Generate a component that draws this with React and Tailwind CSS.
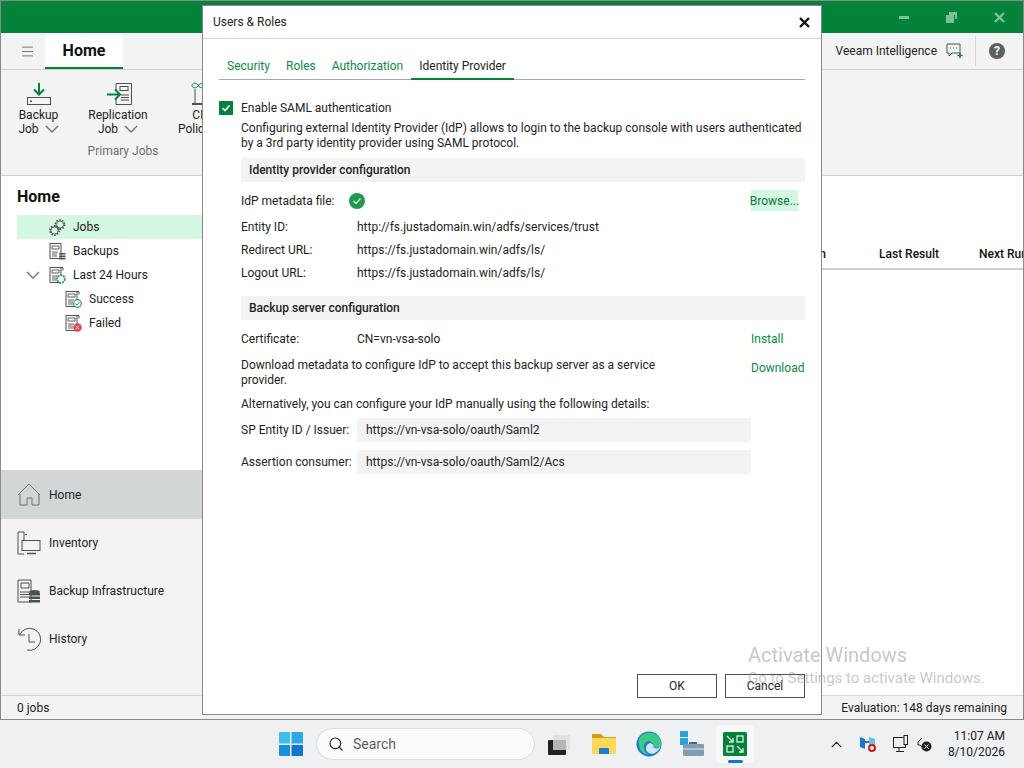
import { ChevronUp, Search, Menu } from "lucide-react";

const Chevron = ({ className = "" }) => (
  <svg width="14" height="8" viewBox="0 0 14 8" fill="none" stroke="#6b7072" strokeWidth="1.3" className={className}>
    <path d="M1 1l6 6 6-6" />
  </svg>
);

const BackupIcon = () => (
  <svg width="26" height="24" viewBox="0 0 26 24" fill="none">
    <path d="M13 1v11M8 7.5l5 5 5-5" stroke="#04823a" strokeWidth="2" />
    <rect x="1.5" y="15.5" width="23" height="7" stroke="#4b5052" />
    <rect x="4" y="18.5" width="2" height="1.5" fill="#04823a" />
  </svg>
);

const ReplicaIcon = () => (
  <svg width="26" height="24" viewBox="0 0 26 24" fill="none" className="ml-[4px]">
    <path d="M9 8V1.5h15.5v21H9V17" stroke="#4b5052" />
    <rect x="13" y="4.5" width="8" height="4" stroke="#4b5052" />
    <path d="M14 13h8M14 15.5h8M14 18h8" stroke="#4b5052" />
    <path d="M0 12.500h12M8 7.500l5 5-5 5" stroke="#04823a" strokeWidth="2" />
  </svg>
);

const CdpIcon = () => (
  <svg width="26" height="27" viewBox="0 0 26 27" fill="none">
    <path d="M7 5c-2-3-6-2-6 0.500s4 3.500 6 0.500 6-3.500 6-0.500-4 3-6 0" stroke="#04823a" />
    <path d="M4 9v14" stroke="#4b5052" />
    <path d="M1 23h12v2H1z" fill="#4b5052" />
  </svg>
);

const GearsIcon = () => (
  <svg width="17" height="17" viewBox="0 0 17 17" fill="none" stroke="#4b5052">
    <circle cx="11" cy="5.500" r="4.600" strokeDasharray="1.500 1.400" strokeWidth="1.600" />
    <circle cx="11" cy="5.500" r="3.600" fill="#d3f7e0" strokeWidth="0.900" />
    <circle cx="5.500" cy="11.500" r="4.600" strokeDasharray="1.500 1.400" strokeWidth="1.600" />
    <circle cx="5.500" cy="11.500" r="3.600" fill="#d3f7e0" strokeWidth="0.900" />
  </svg>
);

const DocLines = () => (
  <>
    <path d="M1 0.500h11v15H1z" stroke="#4b5052" fill="#fff" />
    <path d="M3 3h7v3H3zM3 9h6M3 11h5M3 13h5" stroke="#4b5052" fill="none" strokeWidth="0.900" />
  </>
);

const BackupsIcon = () => (
  <svg width="17" height="17" viewBox="0 0 17 17">
    <DocLines />
    <path d="M10 10h6.500v1.600H10zM10 12.400h6.500V14H10zM10 14.800h6.500v1.700H10z" fill="#4b5052" />
  </svg>
);

const StatusDoc = ({ children }) => (
  <svg width="17" height="17" viewBox="0 0 17 17">
    <path d="M3 0.500h11v3" stroke="#4b5052" fill="none" />
    <DocLines />
    {children}
  </svg>
);

const TreeRow = ({ indent = 49, icon, label, active, chevron }) => (
  <div className={`flex h-[24px] items-center ${active ? "bg-[#d3f7e0]" : ""}`} style={{ paddingLeft: indent - 17 }}>
    {chevron && <Chevron className="-ml-[23px] mr-[9px]" />}
    {icon}
    <span className="ml-[7px]">{label}</span>
  </div>
);

const NavIcon = ({ name }) => {
  if (name === "home")
    return (
      <svg width="24" height="24" viewBox="0 0 24 24" fill="none" stroke="#6b7072">
        <path d="M1 12L12 1l11 11M3 11v11h7v-7h5v7h7V11" />
      </svg>
    );
  if (name === "inventory")
    return (
      <svg width="24" height="24" viewBox="0 0 24 24" fill="none" stroke="#4b5052">
        <path d="M7 10V1h-6v22h6" />
        <rect x="5" y="9.500" width="18" height="10" fill="#f3f3f3" />
        <path d="M10 22.500h9" strokeWidth="1.500" />
        <rect x="8" y="3" width="2" height="1" fill="#04823a" stroke="none" />
      </svg>
    );
  if (name === "infra")
    return (
      <svg width="24" height="24" viewBox="0 0 24 24" fill="none" stroke="#4b5052">
        <path d="M1 1h13v22H1z" />
        <path d="M4 4h8v5H4zM3 13h9M3 15.500h9M3 18h9" />
        <path d="M12 14h11v2.500H12zM12 17.500h11V20H12zM12 21h11v2.500H12z" fill="#4b5052" stroke="none" />
        <ellipse cx="17.500" cy="13" rx="5.500" ry="2" fill="#4b5052" stroke="none" />
      </svg>
    );
  return (
    <svg width="24" height="24" viewBox="0 0 24 24" fill="none" stroke="#4b5052">
      <path d="M3 7a11 11 0 1 1 7 16" />
      <path d="M2 2v6h6M12 7v8h6" />
    </svg>
  );
};

const NavItem = ({ name, label, active }) => (
  <div className={`flex items-center pl-[16px] ${active ? "h-[49px] bg-[#d2d6d6]" : "h-[48px]"}`}>
    <NavIcon name={name} />
    <span className="ml-[8px]">{label}</span>
  </div>
);

const RibbonButton = ({ icon, top, bottom, width }) => (
  <div className="flex flex-col items-center" style={{ width }}>
    <div className="flex h-[29px] items-center">{icon}</div>
    <div className="leading-[14px]">{top}</div>
    <div className="flex items-center gap-[6px] leading-[14px]">
      {bottom}
      <Chevron />
    </div>
  </div>
);

const Section = ({ children }) => (
  <div className="flex h-[24px] items-center bg-[#f3f3f3] pl-[8px] font-medium">{children}</div>
);

const InfoRow = ({ label, value }) => (
  <div className="flex h-[23px] items-center">
    <span className="w-[116px]">{label}</span>
    <span>{value}</span>
  </div>
);

const CopyRow = ({ label, value }) => (
  <div className="flex items-center">
    <span className="w-[116px]">{label}</span>
    <span className="flex h-[24px] w-[394px] items-center bg-[#f3f3f3] pl-[9px]">{value}</span>
  </div>
);

const Dialog = () => (
  <div className="absolute left-[202px] top-[5px] flex h-[710px] w-[620px] flex-col border border-[#8a8a8a] bg-white">
    <div className="flex h-[33px] shrink-0 items-center justify-between border-b border-[#d5d5d5] pl-[10px] pr-[11px]">
      <span>Users &amp; Roles</span>
      <svg width="11" height="11" viewBox="0 0 11 11" stroke="#111" strokeWidth="2.400">
        <path d="M1 1l9 9M10 1l-9 9" />
      </svg>
    </div>

    <div className="mx-[16px] mt-[16px] flex h-[25px] border-b border-[#a8a8a8]">
      <span className="h-[24px] px-[8px] leading-[22px] text-[#0a8a43]">Security</span>
      <span className="h-[24px] px-[8px] leading-[22px] text-[#0a8a43]">Roles</span>
      <span className="h-[24px] px-[8px] leading-[22px] text-[#0a8a43]">Authorization</span>
      <span className="h-[25px] border-b-2 border-[#04823a] px-[8px] leading-[22px]">Identity Provider</span>
    </div>

    <div className="ml-[16px] mr-[16px] mt-[19px] flex items-center">
      <span className="flex h-[14px] w-[14px] items-center justify-center bg-[#04823a]">
        <svg width="10" height="10" viewBox="0 0 10 10" fill="none" stroke="#fff" strokeWidth="1.600">
          <path d="M1.500 5l2.500 2.500 4.500-5" />
        </svg>
      </span>
      <span className="ml-[8px]">Enable SAML authentication</span>
    </div>

    <div className="ml-[38px] mr-[16px] flex flex-col">
      <p className="mt-[4px] whitespace-nowrap leading-[15px]">
        Configuring external Identity Provider (IdP) allows to login to the backup console with users authenticated
        <br />
        by a 3rd party identity provider using SAML protocol.
      </p>
      <div className="mt-[7px]">
        <Section>Identity provider configuration</Section>
      </div>
      <div className="mt-[8px] flex h-[21px] items-center">
        <span className="w-[108px]">IdP metadata file:</span>
        <svg width="16" height="16" viewBox="0 0 16 16" fill="none">
          <circle cx="8" cy="8" r="8" fill="#1d9a50" />
          <path d="M4.500 8l2.500 2.500 4.500-5" stroke="#fff" strokeWidth="1.200" />
        </svg>
        <span className="ml-auto mr-[7px] flex h-[21px] w-[47px] items-center justify-center bg-[#d3f7e0] text-[#0a7a3c]">Browse...</span>
      </div>
      <div className="mt-[4px]">
        <InfoRow label="Entity ID:" value="http://fs.justadomain.win/adfs/services/trust" />
        <InfoRow label="Redirect URL:" value="https://fs.justadomain.win/adfs/ls/" />
        <InfoRow label="Logout URL:" value="https://fs.justadomain.win/adfs/ls/" />
      </div>
      <div className="mt-[12px]">
        <Section>Backup server configuration</Section>
      </div>
      <div className="mt-[8px] flex h-[21px] items-center">
        <span className="w-[116px]">Certificate:</span>
        <span>CN=vn-vsa-solo</span>
        <span className="ml-auto w-[54px] text-[#0a8a43]">Install</span>
      </div>
      <div className="mt-[9px] flex items-start">
        <p className="w-[420px] leading-[15px]">
          Download metadata to configure IdP to accept this backup server as a service
          <br />
          provider.
        </p>
        <span className="ml-auto mt-[3px] w-[54px] leading-[15px] text-[#0a8a43]">Download</span>
      </div>
      <p className="mt-[9px] leading-[15px]">Alternatively, you can configure your IdP manually using the following details:</p>
      <div className="mt-[6px] flex flex-col gap-[8px]">
        <CopyRow label="SP Entity ID / Issuer:" value="https://vn-vsa-solo/oauth/Saml2" />
        <CopyRow label="Assertion consumer:" value="https://vn-vsa-solo/oauth/Saml2/Acs" />
      </div>
    </div>

    <div className="mb-[16px] mr-[16px] mt-auto flex justify-end gap-[8px]">
      <button className="h-[24px] w-[80px] border border-[#4b5052] bg-white">OK</button>
      <button className="h-[24px] w-[80px] border border-[#4b5052] bg-white">Cancel</button>
    </div>
  </div>
);

const Taskbar = () => (
  <div className="flex h-[48px] shrink-0 items-center bg-[#eef0f2] pl-[279px] text-[#1a1a1a]">
    <svg width="24" height="24" viewBox="0 0 24 24">
      <path d="M0 1a1 1 0 0 1 1-1h10v11.500H0z" fill="#3cc0f0" />
      <path d="M12.500 0H23a1 1 0 0 1 1 1v10.500H12.500z" fill="#2aa8e8" />
      <path d="M0 13h11v11H1a1 1 0 0 1-1-1z" fill="#1a90dc" />
      <path d="M12.500 13H24v10a1 1 0 0 1-1 1H12.500z" fill="#0f78cc" />
    </svg>
    <div className="ml-[13px] flex h-[32px] w-[219px] items-center rounded-full border border-[#dcdcdc] bg-[#fbfbfb] pl-[11px]">
      <Search size={16} strokeWidth={1.800} color="#222" />
      <span className="ml-[9px] text-[14px] text-[#5f5f5f]">Search</span>
    </div>
    <svg width="24" height="24" viewBox="0 0 24 24" className="ml-[12px]">
      <rect x="6" y="3" width="17" height="15" rx="1" fill="#e2e2e2" />
      <rect x="1" y="8" width="18" height="15" rx="1" fill="#222" />
      <rect x="6" y="8" width="13" height="10" fill="#b5b5b5" />
    </svg>
    <svg width="26" height="24" viewBox="0 0 26 24" className="ml-[20px]">
      <path d="M1 2h9l3 3h12v3H1z" fill="#d69b14" />
      <path d="M1 6h24v16H1z" fill="#fad858" />
      <path d="M8 22v-5a1 1 0 0 1 1-1h8a1 1 0 0 1 1 1v5z" fill="#1a80c8" />
    </svg>
    <svg width="26" height="26" viewBox="0 0 26 26" className="ml-[19px]">
      <circle cx="13" cy="13" r="12.500" fill="#1b7cc8" />
      <path d="M3 8C6 0 22-2 25.500 12c0 5-7 6-8 2.500 0-3-5-6-8-3-3 3-2 9 3 12-6 1-11-7-9.500-15.500z" fill="#3dc98a" />
      <path d="M11 14c2-3 7-2 6.500 2 1.500 2 5 2 7-1-2 7-9 10-13 6-2-2-2-5-0.500-7z" fill="#fff" opacity="0.800" />
    </svg>
    <svg width="24" height="26" viewBox="0 0 24 26" className="ml-[18px]">
      <path d="M0 0h8v6H0zM0 7h8v7H0z" fill="#2a9fe0" />
      <path d="M9 11h2v3H9z" fill="#2a9fe0" />
      <rect x="3" y="13" width="21" height="12" rx="1" fill="#7f9db5" />
      <path d="M3 18h21" stroke="#dde6ee" />
      <rect x="9" y="11" width="8" height="2" fill="#4c6880" />
    </svg>
    <div className="relative ml-[12px] flex h-[38px] w-[38px] items-center justify-center rounded-[4px] bg-[#f8f8f8]">
      <svg width="24" height="24" viewBox="0 0 24 24" fill="none" stroke="#d9efe2" strokeWidth="1.300">
        <rect width="24" height="24" rx="1.500" fill="#04823a" stroke="none" />
        <path d="M4 4l6 6M10 6v4H6" />
        <rect x="14" y="4" width="6" height="6" />
        <rect x="4" y="14" width="6" height="6" />
        <path d="M14 14l6 6M20 16v4h-4" />
      </svg>
      <span className="absolute bottom-0 left-[12px] h-[3px] w-[15px] rounded-full bg-[#0a78d4]" />
    </div>

    <div className="ml-auto flex items-center pr-[19px]">
      <ChevronUp size={17} strokeWidth={1.800} color="#222" />
      <svg width="18" height="18" viewBox="0 0 18 18" className="ml-[14px]">
        <path d="M1 2l5 2v10l-5-2z" fill="#1a78c8" />
        <path d="M10 2l6 2v8l-6-2z" fill="#6cc0e8" />
        <path d="M6 7h4" stroke="#1a78c8" strokeWidth="2" />
        <circle cx="13" cy="13" r="3" fill="none" stroke="#c82020" strokeWidth="2" />
      </svg>
      <svg width="16" height="18" viewBox="0 0 16 18" fill="none" stroke="#222" className="ml-[16px]">
        <rect x="0.500" y="2.500" width="12" height="10" />
        <path d="M6 13v3M3 16.500h8" />
        <rect x="11" y="0.500" width="3.500" height="9" fill="#eef0f2" />
      </svg>
      <svg width="15" height="15" viewBox="0 0 15 15" className="ml-[8px]">
        <path d="M5 1L1 5v3h2l3 3" fill="none" stroke="#222" />
        <circle cx="9.500" cy="9.500" r="5" fill="#222" />
        <path d="M7.500 7.500l4 4M11.500 7.500l-4 4" stroke="#fff" />
      </svg>
      <div className="ml-[16px] flex flex-col items-end text-[#1a1a1a]">
        <span className="leading-[16px]">11:07 AM</span>
        <span className="leading-[16px]">8/10/2026</span>
      </div>
    </div>
  </div>
);

export default function App() {
  return (
    <div className="relative flex h-[768px] w-[1024px] flex-col overflow-hidden bg-[#eef0f2] font-['Roboto',sans-serif] text-[12px] text-[#1f2223]">
      <div className="flex h-[720px] shrink-0 flex-col border-x border-y border-[#8a8a8a] bg-white">
        {/* Title bar */}
        <div className="flex h-[32px] shrink-0 items-center justify-end bg-[#04823a] pr-[18px]">
          <span className="mr-[37px] h-[3px] w-[10px] bg-[#7fbf9a]" />
          <svg width="11" height="11" viewBox="0 0 11 11" className="mr-[37px]">
            <path d="M3 0h8v7H9V3H3z" fill="#7fbf9a" />
            <path d="M0 3h8v8H0z" fill="#7fbf9a" />
          </svg>
          <svg width="11" height="11" viewBox="0 0 11 11" stroke="#7fbf9a" strokeWidth="2.400">
            <path d="M1 1l9 9M10 1l-9 9" />
          </svg>
        </div>

        {/* Ribbon tabs */}
        <div className="flex h-[37px] shrink-0 items-stretch border-b border-[#d0d0d0] bg-[#f3f3f3]">
          <div className="flex w-[44px] items-center pl-[19px]">
            <Menu size={15} strokeWidth={1.200} color="#4b5052" />
          </div>
          <div className="flex w-[78px] items-center justify-center border-b-2 border-[#04823a] bg-white pt-[1px] text-[16px] font-bold text-[#111]">Home</div>
          <div className="ml-auto flex items-center pr-[18px]">
            <span>Veeam Intelligence</span>
            <svg width="18" height="16" viewBox="0 0 18 16" fill="none" stroke="#4b5052" className="ml-[9px]">
              <path d="M1 1h13v9H6l-3 3v-3H1z" />
              <path d="M4 5h1M7 5h1M10 5h1" />
              <path d="M14 10v5M11.500 12.500h5" stroke="#04823a" strokeWidth="1.500" />
            </svg>
            <span className="ml-[11px] mr-[13px] h-[30px] w-px bg-[#d5d5d5]" />
            <span className="flex h-[16px] w-[16px] items-center justify-center rounded-full bg-[#5a5f62] text-[12px] font-bold text-white">?</span>
          </div>
        </div>

        {/* Ribbon */}
        <div className="flex h-[106px] shrink-0 border-b border-[#d0d0d0] bg-[#f3f3f3] pt-[9px]">
          <div className="flex w-[250px] flex-col pl-[2px]">
            <div className="flex">
              <RibbonButton icon={<BackupIcon />} top="Backup" bottom="Job" width={71} />
              <RibbonButton icon={<ReplicaIcon />} top="Replication" bottom="Job" width={88} />
              <RibbonButton icon={<CdpIcon />} top="CDP" bottom="Policy" width={84} />
            </div>
            <div className="mt-[6px] pr-[8px] text-center text-[#6b7072]">Primary Jobs</div>
          </div>
        </div>

        <div className="flex min-h-0 flex-1">
          {/* Left panel */}
          <div className="flex w-[201px] shrink-0 flex-col">
            <div className="flex-1 pl-[16px] pt-[11px]">
              <div className="mb-[8px] text-[16px] font-bold leading-[20px] text-[#111]">Home</div>
              <TreeRow active icon={<GearsIcon />} label="Jobs" />
              <TreeRow icon={<BackupsIcon />} label="Backups" />
              <TreeRow
                chevron
                icon={
                  <StatusDoc>
                    <circle cx="12" cy="12" r="3.800" fill="#fff" stroke="#2a9a55" strokeWidth="1.800" strokeDasharray="2 0.800" />
                  </StatusDoc>
                }
                label="Last 24 Hours"
              />
              <TreeRow
                indent={65}
                icon={
                  <StatusDoc>
                    <circle cx="12.500" cy="12.500" r="3.800" fill="#fff" stroke="#1d9a50" strokeWidth="1.200" />
                    <path d="M10.500 12.500l1.500 1.500 2.500-3" stroke="#1d9a50" fill="none" />
                  </StatusDoc>
                }
                label="Success"
              />
              <TreeRow
                indent={65}
                icon={
                  <StatusDoc>
                    <circle cx="12.500" cy="12.500" r="4.200" fill="#e0414f" />
                    <path d="M10.800 10.800l3.400 3.400M14.200 10.800l-3.400 3.400" stroke="#fff" />
                  </StatusDoc>
                }
                label="Failed"
              />
            </div>
            <div className="bg-[#f3f3f3]">
              <NavItem active name="home" label="Home" />
              <NavItem name="inventory" label="Inventory" />
              <NavItem name="infra" label="Backup Infrastructure" />
              <NavItem name="history" label="History" />
              <div className="h-[32px]" />
            </div>
          </div>

          {/* Main table */}
          <div className="min-w-0 flex-1 overflow-hidden">
            <div className="mt-[68px] flex h-[26px] items-start whitespace-nowrap border-b-2 border-[#d0d0d0] pt-[1px] font-medium text-[#111]">
              <span className="w-[624px] shrink-0 text-right">Last Run</span>
              <span className="ml-[53px] w-[100px] shrink-0">Last Result</span>
              <span>Next Run</span>
            </div>
          </div>
        </div>

        {/* Status bar */}
        <div className="flex h-[24px] shrink-0 items-center justify-between border-t border-[#d5d5d5] bg-[#f3f3f3] pl-[16px] pr-[16px]">
          <span>0 jobs</span>
          <span>Evaluation: 148 days remaining</span>
        </div>
      </div>

      <Taskbar />
      <Dialog />

      {/* Activation watermark */}
      <div className="pointer-events-none absolute left-[748px] top-[642px] text-[#8f8f8f]/50">
        <div className="text-[20px] leading-[26px]">Activate Windows</div>
        <div className="text-[15px] leading-[20px]">Go to Settings to activate Windows.</div>
      </div>
    </div>
  );
}
